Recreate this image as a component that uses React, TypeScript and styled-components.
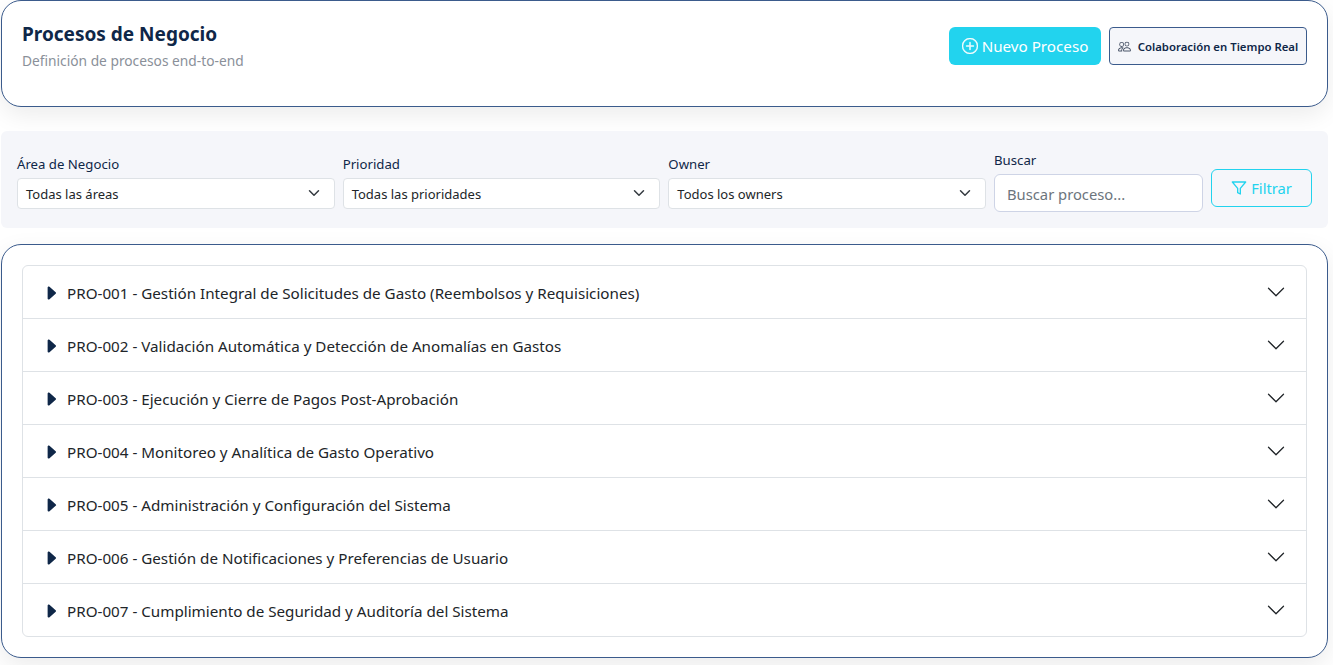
import React, { FC } from 'react';

import styled, { createGlobalStyle } from 'styled-components';
import { BsCaretRightFill, BsChevronDown, BsPeople, BsPlusCircle } from 'react-icons/bs';
import { FiFilter } from 'react-icons/fi';

const processes = [
  'PRO-001 - Gestión Integral de Solicitudes de Gasto (Reembolsos y Requisiciones)',
  'PRO-002 - Validación Automática y Detección de Anomalías en Gastos',
  'PRO-003 - Ejecución y Cierre de Pagos Post-Aprobación',
  'PRO-004 - Monitoreo y Analítica de Gasto Operativo',
  'PRO-005 - Administración y Configuración del Sistema',
  'PRO-006 - Gestión de Notificaciones y Preferencias de Usuario',
  'PRO-007 - Cumplimiento de Seguridad y Auditoría del Sistema',
];

const filters = [
  { label: 'Área de Negocio', value: 'Todas las áreas' },
  { label: 'Prioridad', value: 'Todas las prioridades' },
  { label: 'Owner', value: 'Todos los owners' },
];

const App: FC = () => {
  return (
    <Page>
      <GlobalStyle />
      {/* header */}
      <Header>
        <div>
          <Title>Procesos de Negocio</Title>
          <Subtitle>Definición de procesos end-to-end</Subtitle>
        </div>
        <HeaderActions>
          <PrimaryButton>
            <BsPlusCircle size={16} />
            Nuevo Proceso
          </PrimaryButton>
          <OutlineButton>
            <BsPeople size={13} />
            Colaboración en Tiempo Real
          </OutlineButton>
        </HeaderActions>
      </Header>

      {/* filters */}
      <FilterBar>
        {filters.map((f) => (
          <SelectField key={f.label}>
            <FieldLabel>{f.label}</FieldLabel>
            <SelectBox>
              <span>{f.value}</span>
              <SelectArrow viewBox="0 0 16 16">
                <path d="m2 5 6 6 6-6" />
              </SelectArrow>
            </SelectBox>
          </SelectField>
        ))}
        <SearchField>
          <FieldLabel>Buscar</FieldLabel>
          <SearchInput placeholder="Buscar proceso..." />
        </SearchField>
        <FilterButton>
          <FiFilter size={16} />
          Filtrar
        </FilterButton>
      </FilterBar>

      {/* list */}
      <ListCard>
        <Accordion>
          {processes.map((p) => (
            <AccordionRow key={p}>
              <RowTitle>
                <BsCaretRightFill size={18} />
                {p}
              </RowTitle>
              <BsChevronDown size={20} />
            </AccordionRow>
          ))}
        </Accordion>
      </ListCard>
    </Page>
  );
};

const GlobalStyle = createGlobalStyle`
  * {
    box-sizing: border-box;
  }

  html,
  body {
    margin: 0;
    background: #fff;
    overflow: hidden;
  }

  body {
    font-family: "Noto Sans", "Open Sans", sans-serif;
    color: #212529;
  }
`;

const Page = styled.div`
  width: 1328px;
  height: 665px;
  padding-left: 1px;
`;

const Header = styled.header`
  height: 107px;
  display: flex;
  justify-content: space-between;
  align-items: flex-start;
  padding: 20px 20px 0;
  background: #fff;
  border: 1px solid #3b5b8c;
  border-radius: 20px;
  box-shadow: 0 8px 24px rgba(0, 0, 0, 0.08);
  margin-bottom: 24px;
`;

const Title = styled.h1`
  margin: 0;
  font-size: 19px;
  line-height: 26px;
  font-weight: 700;
  color: #0f2748;
`;

const Subtitle = styled.p`
  margin: 4px 0 0;
  font-size: 13.75px;
  line-height: 19px;
  color: #8a9099;
`;

const HeaderActions = styled.div`
  display: flex;
  gap: 8px;
  margin-top: 6px;
`;

const PrimaryButton = styled.button`
  height: 38px;
  width: 152px;
  display: flex;
  align-items: center;
  justify-content: center;
  gap: 4px;
  border: 0;
  border-radius: 6px;
  background: #22d3ee;
  color: #fff;
  font: inherit;
  font-size: 15.2px;

  svg {
    stroke: currentColor;
    stroke-width: 0.4;
  }
`;

const OutlineButton = styled.button`
  height: 38px;
  width: 198px;
  display: flex;
  align-items: center;
  justify-content: center;
  gap: 7px;
  border: 1px solid #3b5b8c;
  border-radius: 4px;
  background: #f5f6fa;
  color: #0f2748;
  font: inherit;
  font-size: 11.35px;
  font-weight: 600;

  svg {
    color: #4a5568;
  }
`;

const FilterBar = styled.section`
  height: 97px;
  display: flex;
  align-items: flex-start;
  gap: 8px;
  padding: 20px 16px 16px;
  background: #f5f6fa;
  border-radius: 6px;
  margin-bottom: 16px;
`;

const SelectField = styled.div`
  flex: 1 1 0;
  margin-top: 4px;
`;

const SearchField = styled.div`
  width: 209px;
  flex: none;
`;

const FieldLabel = styled.label`
  display: block;
  font-size: 13.2px;
  line-height: 19px;
  margin-bottom: 4px;
  color: #0f2748;
`;

const SelectBox = styled.div`
  position: relative;
  height: 31px;
  display: flex;
  align-items: center;
  padding: 1px 8px 0;
  background: #fff;
  border: 1px solid #dee2e6;
  border-radius: 4px;
  font-size: 13px;
  color: #212529;
`;

const SelectArrow = styled.svg`
  position: absolute;
  right: 14px;
  top: 8px;
  width: 12px;
  height: 12px;
  fill: none;
  stroke: #343a40;
  stroke-width: 2;
  stroke-linecap: round;
  stroke-linejoin: round;
`;

const SearchInput = styled.input`
  display: block;
  width: 100%;
  height: 38px;
  padding: 1px 12px 0;
  background: #fff;
  border: 1px solid #ced4e6;
  border-radius: 6px;
  font: inherit;
  font-size: 14.75px;
  outline: none;

  &::placeholder {
    color: #6c757d;
  }
`;

const FilterButton = styled.button`
  width: 101px;
  height: 38px;
  flex: none;
  margin-top: 18px;
  display: flex;
  align-items: center;
  justify-content: center;
  gap: 4px;
  background: transparent;
  border: 1px solid #22d3ee;
  border-radius: 6px;
  color: #22d3ee;
  font: inherit;
  font-size: 14.7px;
`;

const ListCard = styled.section`
  height: 414px;
  padding: 20px;
  background: #fff;
  border: 1px solid #3b5b8c;
  border-radius: 20px;
  box-shadow: 0 8px 24px rgba(0, 0, 0, 0.08);
`;

const Accordion = styled.div`
  border: 1px solid #dee2e6;
  border-radius: 6px;
  overflow: hidden;
`;

const AccordionRow = styled.div`
  box-sizing: content-box;
  height: 52px;
  display: flex;
  align-items: center;
  justify-content: space-between;
  padding: 0 20px 0 19px;
  color: #212529;

  & + & {
    border-top: 1px solid #dee2e6;
  }
`;

const RowTitle = styled.div`
  display: flex;
  align-items: center;
  gap: 7px;
  padding-top: 2px;
  font-size: 15.2px;
  color: #212529;

  svg {
    color: #0f2748;
  }
`;

export default App;
